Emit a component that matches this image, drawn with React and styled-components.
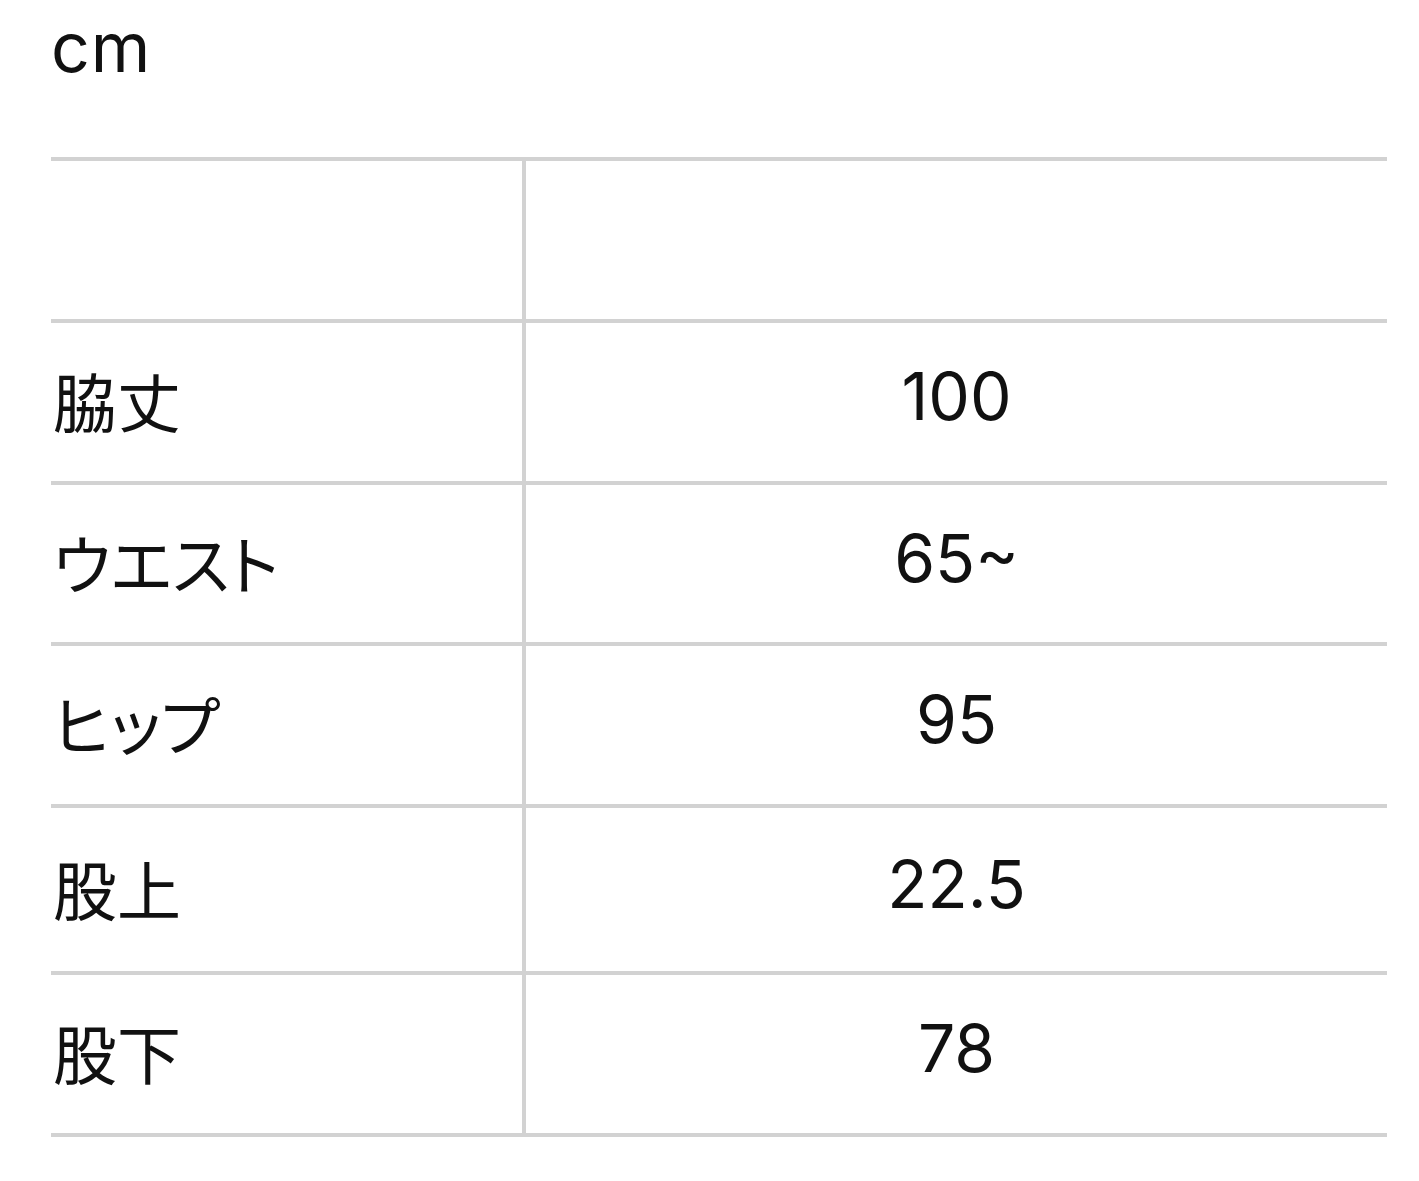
import React from "react";
import styled, { createGlobalStyle } from "styled-components";

const GlobalStyle = createGlobalStyle`
  body {
    margin: 0;
    background: #ffffff;
    font-family: Inter, "Noto Sans CJK JP", sans-serif;
    color: #111111;
  }
`;

const Page = styled.section`
  padding: 0 32px 0 51px;
`;

const Unit = styled.div`
  height: 157px;
  font-size: 68px;
  line-height: 1;
  padding-top: 13px;
  box-sizing: border-box;
  letter-spacing: 1px;
`;

const Table = styled.div`
  width: 1336px;
  border-bottom: 4px solid #d2d2d2;
`;

const Row = styled.div`
  display: grid;
  grid-template-columns: 471px 1fr;
  height: ${(p) => p.$h}px;
  box-sizing: border-box;
  border-top: 4px solid #d2d2d2;
`;

const Label = styled.div`
  display: flex;
  align-items: center;
  font-family: "Noto Sans CJK JP", sans-serif;
  font-size: 64px;
  font-feature-settings: "palt";
  padding: 0 0 6px 2px;
`;

const Value = styled.div`
  display: flex;
  align-items: center;
  justify-content: center;
  border-left: 4px solid #d2d2d2;
  font-size: 66px;
  padding-bottom: 12px;
  box-sizing: border-box;
`;

const rows = [
  { label: "", value: "", h: 162 },
  { label: "脇丈", value: "100", h: 162 },
  { label: "ウエスト", value: "65~", h: 161 },
  { label: "ヒップ", value: "95", h: 162 },
  { label: "股上", value: "22.5", h: 167 },
  { label: "股下", value: "78", h: 162 },
];

const App = () => {
  return (
    <Page>
      <GlobalStyle />
      <Unit>cm</Unit>
      <Table>
        {rows.map((row, idx) => (
          <Row key={idx} $h={row.h}>
            <Label>{row.label}</Label>
            <Value>{row.value}</Value>
          </Row>
        ))}
      </Table>
    </Page>
  );
};

export default App;
